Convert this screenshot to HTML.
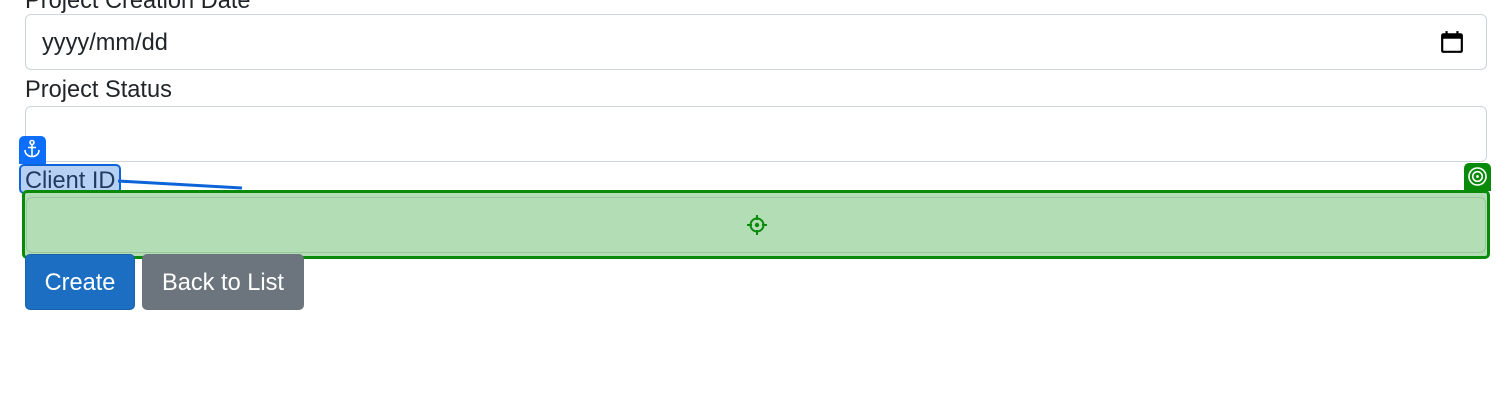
<!DOCTYPE html>
<html><head><style>
body{margin:0;width:1510px;height:402px;background:#fff;font-family:"Liberation Sans",sans-serif;color:#212529;position:relative;overflow:hidden}
.a{position:absolute}
.inp{position:absolute;left:25px;width:1460px;border:1px solid #ced4da;border-radius:6px;background:#fff}
.lbl{position:absolute;left:25px;font-size:23.6px}
.btn{position:absolute;top:254px;height:56px;border-radius:5px;color:#fff;font-size:23.6px;line-height:58px;text-align:center}
</style></head><body>
<div class="lbl" style="top:-12px">Project Creation Date</div>
<div class="inp" style="top:14px;height:54px"></div>
<div class="a" style="left:42px;top:30px;font-size:23.6px">yyyy/mm/dd</div>
<svg class="a" style="left:1440px;top:30px" width="24" height="24" viewBox="0 0 22 22"><rect x="2" y="4" width="18" height="16" rx="1" fill="none" stroke="#000" stroke-width="2"/><rect x="2" y="4" width="18" height="4" fill="#000"/><rect x="5" y="1" width="2" height="4" fill="#000"/><rect x="15" y="1" width="2" height="4" fill="#000"/></svg>
<div class="lbl" style="top:77px">Project Status</div>
<div class="inp" style="top:106px;height:54px"></div>
<div class="a" style="left:19px;top:136px;width:27px;height:28px;background:#0d6efd;border-radius:5px 5px 0 0"></div>
<svg class="a" style="left:22px;top:139px" width="20" height="20" viewBox="0 0 20 20"><circle cx="10" cy="3.5" r="2" fill="none" stroke="#fff" stroke-width="1.6"/><path d="M10 5.5v12M6 8.5h8M3 11c0 4 3 6.5 7 6.5s7-2.5 7-6.5" fill="none" stroke="#fff" stroke-width="1.6"/></svg>
<div class="a" style="left:19px;top:164px;width:94px;height:26px;background:#b6d0f3;border:2px solid #0d64d8;border-radius:5px;font-size:23.6px;line-height:30px;color:#1e3a5f;padding-left:4px;white-space:nowrap">Client ID</div>
<svg class="a" style="left:118px;top:178px" width="130" height="14"><line x1="0" y1="3" x2="124" y2="10" stroke="#0d64d8" stroke-width="3"/></svg>
<div class="a" style="left:1464px;top:163px;width:27px;height:28px;background:#0a8a0a;border-radius:5px 5px 0 0"></div>
<svg class="a" style="left:1467px;top:166px" width="21" height="21"><circle cx="10.5" cy="10.5" r="8.5" fill="none" stroke="#fff" stroke-width="1.6"/><circle cx="10.5" cy="10.5" r="4.8" fill="none" stroke="#fff" stroke-width="1.6"/><circle cx="10.5" cy="10.5" r="1.4" fill="#fff"/></svg>
<div class="a" style="left:22px;top:190px;width:1462px;height:63px;border:3px solid #0a8a0a;border-radius:5px;background:#b3ddb5"></div>
<div class="a" style="left:26px;top:197px;width:1460px;height:56px;border:1px solid #99c69c;border-radius:6px;box-sizing:border-box"></div>
<svg class="a" style="left:746px;top:214px" width="22" height="22"><circle cx="11" cy="11" r="6.5" fill="none" stroke="#0a8a0a" stroke-width="2"/><circle cx="11" cy="11" r="2.2" fill="#0a8a0a"/><path d="M11 1v5M11 16v5M1 11h5M16 11h5" stroke="#0a8a0a" stroke-width="2"/></svg>
<div class="btn" style="left:25px;width:110px;background:#1b6ec2;border:1px solid #1861ac;box-sizing:border-box;line-height:56px">Create</div>
<div class="btn" style="left:142px;width:162px;background:#6c757d">Back to List</div>
</body></html>
